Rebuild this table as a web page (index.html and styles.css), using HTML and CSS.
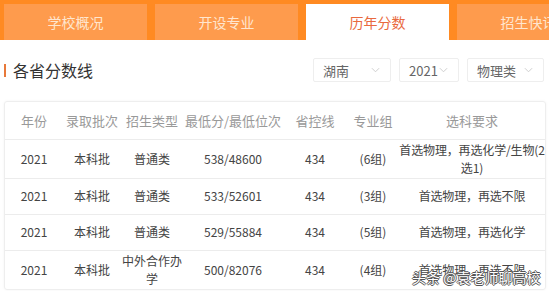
FILE: index.html
```html
<!DOCTYPE html>
<html lang="zh-CN">
<head>
<meta charset="utf-8">
<title>历年分数</title>
<link rel="stylesheet" href="styles.css">
</head>
<body>
<div class="page">
  <nav class="tabs">
    <div class="tab">学校概况</div>
    <div class="tab">开设专业</div>
    <div class="tab active">历年分数</div>
    <div class="tab">招生快讯</div>
  </nav>
  <section class="section">
    <div class="title-row">
      <h2 class="title">各省分数线</h2>
      <div class="filters">
        <div class="select s-prov"><span>湖南</span><svg class="chev" viewBox="0 0 10 6"><path d="M1 1l4 4 4-4" fill="none" stroke="#c8c8c8" stroke-width="1"/></svg></div>
        <div class="select s-year"><span>2021</span><svg class="chev" viewBox="0 0 10 6"><path d="M1 1l4 4 4-4" fill="none" stroke="#c8c8c8" stroke-width="1"/></svg></div>
        <div class="select s-type"><span>物理类</span><svg class="chev" viewBox="0 0 10 6"><path d="M1 1l4 4 4-4" fill="none" stroke="#c8c8c8" stroke-width="1"/></svg></div>
      </div>
    </div>
    <div class="card">
      <table class="scores">
        <colgroup>
          <col class="c1"><col class="c2"><col class="c3"><col class="c4"><col class="c5"><col class="c6"><col class="c7">
        </colgroup>
        <thead>
          <tr><th>年份</th><th>录取批次</th><th>招生类型</th><th>最低分/最低位次</th><th>省控线</th><th>专业组</th><th>选科要求</th></tr>
        </thead>
        <tbody>
          <tr><td>2021</td><td>本科批</td><td>普通类</td><td>538/48600</td><td>434</td><td>(6组)</td><td class="req">首选物理，再选化学/生物(2选1)</td></tr>
          <tr><td>2021</td><td>本科批</td><td>普通类</td><td>533/52601</td><td>434</td><td>(3组)</td><td class="req">首选物理，再选不限</td></tr>
          <tr><td>2021</td><td>本科批</td><td>普通类</td><td>529/55884</td><td>434</td><td>(5组)</td><td class="req">首选物理，再选化学</td></tr>
          <tr><td>2021</td><td>本科批</td><td class="narrow">中外合作办学</td><td>500/82076</td><td>434</td><td>(4组)</td><td class="req">首选物理，再选不限</td></tr>
        </tbody>
      </table>
    </div>
  </section>
  <div class="watermark">头条 @袁老师聊高校</div>
</div>
</body>
</html>
```

FILE: styles.css
```css
* { box-sizing: border-box; }
html, body { margin: 0; padding: 0; background: #fff; }
body {
  font-family: "Noto Sans CJK SC", "Noto Sans", sans-serif;
  color: #333;
  width: 549px;
  height: 291px;
  overflow: hidden;
}
.page { position: relative; width: 549px; height: 291px; overflow: hidden; }

.tabs {
  display: flex;
  gap: 8px;
  padding: 4px 0 0 4px;
  background: #ff8a22;
  height: 40px;
  overflow: hidden;
}
.tab {
  flex: 0 0 143px;
  height: 36px;
  background: #fe9b4d;
  color: #ffe6cf;
  font-size: 14px;
  line-height: 36px;
  text-align: center;
  white-space: nowrap;
}
.tab.active { background: #fff; color: #e9693e; }

.section { padding: 0 5px 0 4px; }
.title-row {
  display: flex;
  align-items: center;
  justify-content: space-between;
  margin-top: 17px;
  height: 26px;
}
.title {
  margin: 0;
  font-size: 16px;
  font-weight: normal;
  color: #333;
  line-height: 26px;
  padding-left: 7px;
  border-left: 2px solid #e8793a;
  height: 13px;
  display: flex;
  align-items: center;
}
.filters { display: flex; gap: 8px; }
.select {
  height: 24px;
  border: 1px solid #eeeeee;
  border-radius: 2px;
  display: flex;
  align-items: center;
  justify-content: space-between;
  padding: 0 10px 0 9px;
  font-size: 13px;
  color: #666;
}
.s-prov { width: 78px; }
.s-year { width: 60px; }
.s-type { width: 77px; }
.chev { width: 9px; height: 6px; }

.card {
  margin-top: 18px;
  width: 542px;
  border: 1px solid #eeeeee;
  border-radius: 3px;
  box-shadow: 0 0 3px rgba(0,0,0,0.05);
}
.scores {
  width: 100%;
  border-collapse: collapse;
  table-layout: fixed;
}
.c1 { width: 58px; } .c2 { width: 58px; } .c3 { width: 62px; }
.c4 { width: 100px; } .c5 { width: 64px; } .c6 { width: 52px; } .c7 { width: 146px; }
.scores th {
  height: 37px;
  font-size: 13px;
  font-weight: normal;
  color: #999;
  text-align: center;
  white-space: nowrap;
  padding: 0;
}
.scores td {
  height: 36px;
  padding: 1px 3px;
  font-size: 12px;
  line-height: 18px;
  color: #444;
  text-align: center;
  border-top: 1px solid #ececec;
}
.scores td.narrow { padding: 1px 1px; }
.scores td.req { padding: 1px 0; letter-spacing: -0.15px; }

.watermark {
  position: absolute;
  left: 412px;
  top: 267px;
  font-size: 14px;
  color: #fff;
  white-space: nowrap;
  text-shadow: 1px 0 0 #555, -1px 0 0 #555, 0 1px 0 #555, 0 -1px 0 #555;
}
```
